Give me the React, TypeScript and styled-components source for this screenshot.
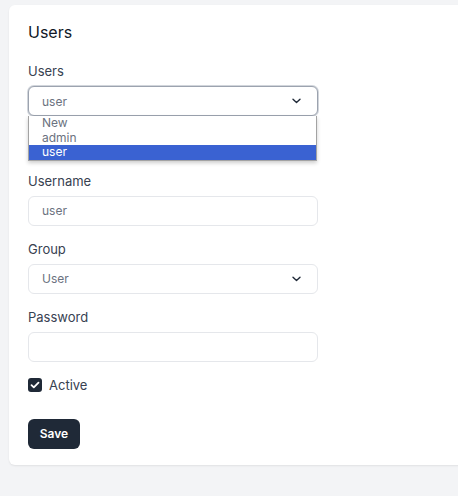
import React from 'react';
import styled, { createGlobalStyle } from 'styled-components';

const GlobalStyle = createGlobalStyle`
  html, body {
    margin: 0;
    padding: 0;
    background: #f3f4f6;
    font-family: Inter, "Noto Sans", sans-serif;
    color: #1f2937;
  }
`;

const Chevron = () => (
  <svg width="9" height="6" viewBox="0 0 9 6" fill="none">
    <path d="M1 1.2l3.5 3.3L8 1.2" stroke="#1f2937" strokeWidth="1.4" strokeLinecap="round" strokeLinejoin="round" />
  </svg>
);

const Check = () => (
  <svg width="10" height="8" viewBox="0 0 10 8" fill="none">
    <path d="M1.5 4.2l2.3 2.2L8.5 1.6" stroke="#fff" strokeWidth="1.8" strokeLinecap="round" strokeLinejoin="round" />
  </svg>
);

const options = ['New', 'admin', 'user'];

export default function App() {
  return (
    <>
      <GlobalStyle />
      <Page>
        <Card>
          <Title>Users</Title>
          <Field $gap={10}>
            <Label>Users</Label>
            <div>
              <SelectBox $focused>
                <Value>user</Value>
                <Chevron />
              </SelectBox>
              <OptionList>
                {options.map((o) => (
                  <OptionItem key={o} $selected={o === 'user'}>
                    {o}
                  </OptionItem>
                ))}
              </OptionList>
            </div>
          </Field>
          <Field>
            <Label>Username</Label>
            <Input>
              <Value>user</Value>
            </Input>
          </Field>
          <Field>
            <Label>Group</Label>
            <SelectBox>
              <Value>User</Value>
              <Chevron />
            </SelectBox>
          </Field>
          <Field>
            <Label>Password</Label>
            <Input />
          </Field>
          <CheckRow>
            <CheckBox>
              <Check />
            </CheckBox>
            <CheckLabel>Active</CheckLabel>
          </CheckRow>
          <SaveButton>Save</SaveButton>
        </Card>
      </Page>
    </>
  );
}

const Page = styled.div`
  width: 458px;
  height: 496px;
  padding: 5px 0 0 9px;
  box-sizing: border-box;
  overflow: hidden;
`;

const Card = styled.div`
  width: 470px;
  height: 460px;
  box-sizing: border-box;
  background: #ffffff;
  border-radius: 6px;
  box-shadow: 0 1px 2px rgba(0, 0, 0, 0.08);
  padding: 17px 0 0 19px;
  display: flex;
  flex-direction: column;
`;

const Title = styled.h2`
  margin: 0 0 19px;
  font-size: 16px;
  line-height: 20px;
  font-weight: 400;
  color: #111827;
`;

const Field = styled.div<{ $gap?: number }>`
  display: flex;
  flex-direction: column;
  gap: 5px;
  width: 290px;
  margin-bottom: ${(p) => p.$gap ?? 13}px;
`;

const Label = styled.label`
  font-size: 13px;
  line-height: 20px;
  font-weight: 400;
  color: #374151;
`;

const SelectBox = styled.div<{ $focused?: boolean }>`
  height: 30px;
  box-sizing: border-box;
  display: flex;
  align-items: center;
  justify-content: space-between;
  padding: 0 16px 0 13px;
  background: #fff;
  border: 1px solid ${(p) => (p.$focused ? '#9ca3af' : '#e5e7eb')};
  border-radius: 6px;
  box-shadow: ${(p) => (p.$focused ? '0 0 0 1px #d1d5db' : 'none')};
`;

const Input = styled.div`
  height: 30px;
  box-sizing: border-box;
  display: flex;
  align-items: center;
  padding: 0 13px;
  background: #fff;
  border: 1px solid #e5e7eb;
  border-radius: 6px;
`;

const Value = styled.span`
  font-size: 12px;
  color: #6b7280;
`;

const OptionList = styled.ul`
  list-style: none;
  margin: 0;
  padding: 0;
  width: 289px;
  box-sizing: border-box;
  border: 1px solid #a3a3a3;
  border-top: none;
  background: #fff;
  box-shadow: 0 2px 4px rgba(0, 0, 0, 0.2);
`;

const OptionItem = styled.li<{ $selected?: boolean }>`
  height: 14.5px;
  line-height: 14.5px;
  padding-left: 13px;
  font-size: 12px;
  color: ${(p) => (p.$selected ? '#ffffff' : '#6b7280')};
  background: ${(p) => (p.$selected ? '#3a62d2' : 'transparent')};
`;

const CheckRow = styled.div`
  display: flex;
  align-items: center;
  gap: 7px;
  margin: 0 0 24px;
`;

const CheckBox = styled.span`
  width: 14px;
  height: 14px;
  border-radius: 3px;
  background: #1f2937;
  display: flex;
  align-items: center;
  justify-content: center;
`;

const CheckLabel = styled.span`
  font-size: 13px;
  line-height: 20px;
  color: #374151;
`;

const SaveButton = styled.button`
  align-self: flex-start;
  width: 52px;
  height: 30px;
  border: none;
  border-radius: 6px;
  background: #1f2937;
  color: #fff;
  font-family: Inter, "Noto Sans", sans-serif;
  font-size: 12px;
  font-weight: 600;
  padding: 0;
`;
